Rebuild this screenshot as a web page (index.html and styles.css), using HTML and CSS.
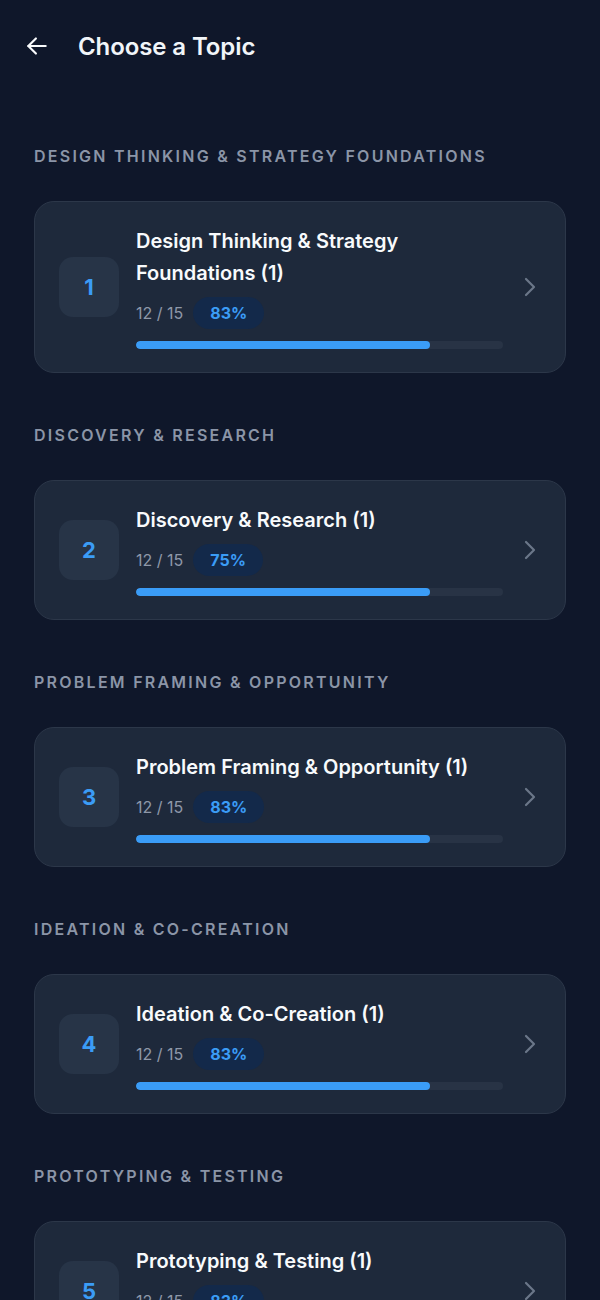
FILE: index.html
```html
<!DOCTYPE html>
<html lang="en">
<head>
  <meta charset="UTF-8">
  <meta name="viewport" content="width=device-width, initial-scale=1.0">
  <title>Choose a Topic</title>
  <link rel="stylesheet" href="styles.css">
</head>
<body>
  <header class="topbar">
    <button class="back" aria-label="Back">
      <svg width="26" height="26" viewBox="0 0 24 24" fill="none" stroke="currentColor" stroke-width="2" stroke-linecap="round" stroke-linejoin="round"><path d="M20 12H4"/><path d="M11 5l-7 7 7 7"/></svg>
    </button>
    <h1>Choose a Topic</h1>
  </header>

  <main class="topics">
    <section class="group">
      <h2 class="group-title">Design Thinking &amp; Strategy Foundations</h2>
      <div class="card">
        <div class="num">1</div>
        <div class="info">
          <div class="title">Design Thinking &amp; Strategy Foundations (1)</div>
          <div class="stats"><span class="count">12 / 15</span><span class="badge">83%</span></div>
          <div class="bar"><div class="fill" style="width: 80%"></div></div>
        </div>
        <svg class="chev" width="24" height="24" viewBox="0 0 24 24" fill="none" stroke="currentColor" stroke-width="2.2" stroke-linecap="round" stroke-linejoin="round"><path d="M9 4l8 8-8 8"/></svg>
      </div>
    </section>

    <section class="group">
      <h2 class="group-title">Discovery &amp; Research</h2>
      <div class="card">
        <div class="num">2</div>
        <div class="info">
          <div class="title">Discovery &amp; Research (1)</div>
          <div class="stats"><span class="count">12 / 15</span><span class="badge">75%</span></div>
          <div class="bar"><div class="fill" style="width: 80%"></div></div>
        </div>
        <svg class="chev" width="24" height="24" viewBox="0 0 24 24" fill="none" stroke="currentColor" stroke-width="2.2" stroke-linecap="round" stroke-linejoin="round"><path d="M9 4l8 8-8 8"/></svg>
      </div>
    </section>

    <section class="group">
      <h2 class="group-title">Problem Framing &amp; Opportunity</h2>
      <div class="card">
        <div class="num">3</div>
        <div class="info">
          <div class="title">Problem Framing &amp; Opportunity (1)</div>
          <div class="stats"><span class="count">12 / 15</span><span class="badge">83%</span></div>
          <div class="bar"><div class="fill" style="width: 80%"></div></div>
        </div>
        <svg class="chev" width="24" height="24" viewBox="0 0 24 24" fill="none" stroke="currentColor" stroke-width="2.2" stroke-linecap="round" stroke-linejoin="round"><path d="M9 4l8 8-8 8"/></svg>
      </div>
    </section>

    <section class="group">
      <h2 class="group-title">Ideation &amp; Co-Creation</h2>
      <div class="card">
        <div class="num">4</div>
        <div class="info">
          <div class="title">Ideation &amp; Co-Creation (1)</div>
          <div class="stats"><span class="count">12 / 15</span><span class="badge">83%</span></div>
          <div class="bar"><div class="fill" style="width: 80%"></div></div>
        </div>
        <svg class="chev" width="24" height="24" viewBox="0 0 24 24" fill="none" stroke="currentColor" stroke-width="2.2" stroke-linecap="round" stroke-linejoin="round"><path d="M9 4l8 8-8 8"/></svg>
      </div>
    </section>

    <section class="group">
      <h2 class="group-title">Prototyping &amp; Testing</h2>
      <div class="card">
        <div class="num">5</div>
        <div class="info">
          <div class="title">Prototyping &amp; Testing (1)</div>
          <div class="stats"><span class="count">12 / 15</span><span class="badge">83%</span></div>
          <div class="bar"><div class="fill" style="width: 80%"></div></div>
        </div>
        <svg class="chev" width="24" height="24" viewBox="0 0 24 24" fill="none" stroke="currentColor" stroke-width="2.2" stroke-linecap="round" stroke-linejoin="round"><path d="M9 4l8 8-8 8"/></svg>
      </div>
    </section>
  </main>
</body>
</html>
```

FILE: styles.css
```css
body {
  margin: 0;
  padding: 0;
  background: #0f172a;
  color: #f1f5f9;
  font-family: Inter, 'Noto Sans', sans-serif;
}
.topbar {
  display: flex;
  align-items: center;
  gap: 28px;
  padding: 24px 24px 0;
  height: 44px;
}
.back {
  background: none;
  border: none;
  padding: 0;
  color: #f8fafc;
  display: flex;
  cursor: pointer;
}
.topbar h1 {
  margin: 0;
  font-size: 24px;
  font-weight: 600;
  letter-spacing: -0.1px;
}
.topics {
  padding: 78px 34px 0;
}
.group {
  margin-bottom: 52px;
}
.group-title {
  margin: 0 0 35px;
  font-size: 16px;
  line-height: 20px;
  font-weight: 600;
  letter-spacing: 2.25px;
  text-transform: uppercase;
  color: #8b95a7;
}
.card {
  display: flex;
  align-items: center;
  padding: 23px 24px;
  background: #1e293b;
  border: 1px solid #2c3749;
  border-radius: 20px;
}
.num {
  flex: none;
  width: 60px;
  height: 60px;
  border-radius: 14px;
  background: #273447;
  color: #3b9cf6;
  font-size: 22px;
  font-weight: 700;
  display: flex;
  align-items: center;
  justify-content: center;
  margin-right: 17px;
}
.info {
  flex: 1;
  min-width: 0;
}
.title {
  font-size: 20px;
  line-height: 32px;
  font-weight: 600;
  color: #f8fafc;
}
.stats {
  display: flex;
  align-items: center;
  gap: 10px;
  margin-top: 8px;
}
.count {
  font-size: 16px;
  color: #8e98a9;
}
.badge {
  display: inline-block;
  padding: 0 17px;
  height: 32px;
  line-height: 32px;
  border-radius: 16px;
  background: #13294a;
  color: #3b9cf6;
  font-size: 16px;
  font-weight: 700;
}
.bar {
  margin-top: 12px;
  height: 8px;
  background: #283345;
  border-radius: 4px;
  overflow: hidden;
}
.fill {
  height: 100%;
  background: #3a9cf7;
  border-radius: 4px;
}
.chev {
  flex: none;
  margin-left: 14px;
  color: #6b7789;
}
```
